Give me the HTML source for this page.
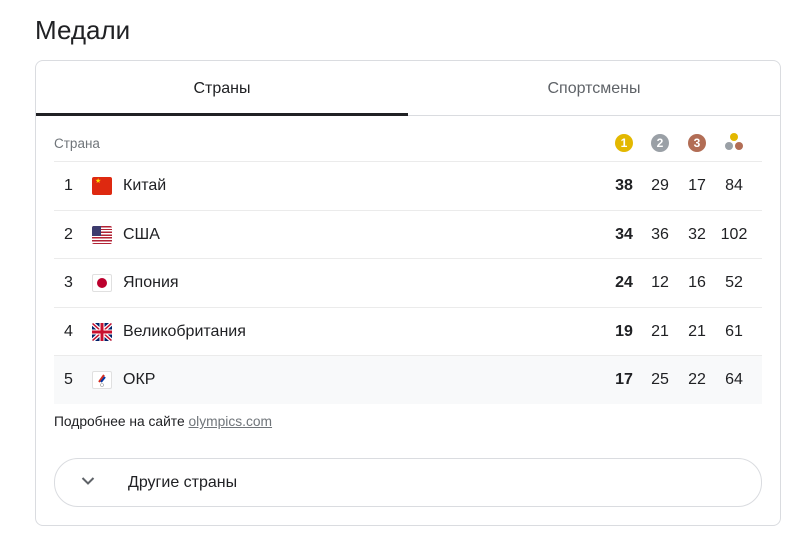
<!DOCTYPE html>
<html><head><meta charset="utf-8"><style>
body{margin:0;background:#fff;font-family:"Liberation Sans",Arial,sans-serif;color:#202124;width:800px;height:534px;overflow:hidden;position:relative}
.abs{position:absolute}
h1{position:absolute;left:35px;top:15px;margin:0;font-size:26px;font-weight:normal;color:#202124}
.card{position:absolute;left:35px;top:60px;width:744px;height:464px;border:1px solid #dadce0;border-radius:8px}
.tab{position:absolute;top:0;height:55px;line-height:55px;font-size:16px;text-align:center}
.row{position:absolute;left:54px;width:708px;height:48px;border-top:1px solid #ebebeb;font-size:16px}
.row span{position:absolute;top:0;line-height:48px}
.c{width:40px;text-align:center;margin-left:-20px}
.med{position:absolute;top:134px;width:18px;height:18px;border-radius:50%;color:#fff;font-size:12px;font-weight:bold;text-align:center;line-height:18px}
.flag{position:absolute;left:38px;top:15px;width:20px;height:18px;border-radius:2px;overflow:hidden}
</style></head><body>
<h1>Медали</h1>
<div class="card">
<div class="tab" style="left:0;width:372px">Страны</div>
<div class="tab" style="left:372px;width:372px;color:#5f6368">Спортсмены</div>
<div class="abs" style="left:0;top:54px;width:744px;height:1px;background:#dadce0"></div>
<div class="abs" style="left:0;top:52px;width:372px;height:3px;background:#202124"></div>
</div>
<div class="abs" style="left:54px;top:136px;font-size:13.5px;color:#70757a">Страна</div>
<div class="med" style="left:615px;background:#e3b800">1</div>
<div class="med" style="left:651px;background:#9aa0a6">2</div>
<div class="med" style="left:688px;background:#b26d55">3</div>
<div class="abs" style="left:730px;top:133px;width:8px;height:8px;border-radius:50%;background:#e3b800"></div>
<div class="abs" style="left:725px;top:142px;width:8px;height:8px;border-radius:50%;background:#9aa0a6"></div>
<div class="abs" style="left:735px;top:142px;width:8px;height:8px;border-radius:50%;background:#b26d55"></div>

<div class="row" style="top:161px"><span style="left:10px">1</span><div class="flag" style="background:#de2910"><span style="color:#ffde00;font-size:7px;line-height:9px;left:3px">★</span></div><span style="left:69px">Китай</span><span class="c" style="left:570px;font-weight:bold">38</span><span class="c" style="left:606px">29</span><span class="c" style="left:643px">17</span><span class="c" style="left:680px">84</span></div>
<div class="row" style="top:210px"><span style="left:10px">2</span><div class="flag" style="background:repeating-linear-gradient(#b22234 0 1.4px,#fff 1.4px 2.8px)"><div style="width:9px;height:10px;background:#3c3b6e"></div></div><span style="left:69px">США</span><span class="c" style="left:570px;font-weight:bold">34</span><span class="c" style="left:606px">36</span><span class="c" style="left:643px">32</span><span class="c" style="left:680px">102</span></div>
<div class="row" style="top:258px"><span style="left:10px">3</span><div class="flag" style="background:#fff;border:1px solid #e0e0e0;width:18px;height:16px"><div style="position:absolute;left:4px;top:3px;width:10px;height:10px;border-radius:50%;background:#bc002d"></div></div><span style="left:69px">Япония</span><span class="c" style="left:570px;font-weight:bold">24</span><span class="c" style="left:606px">12</span><span class="c" style="left:643px">16</span><span class="c" style="left:680px">52</span></div>
<div class="row" style="top:307px"><span style="left:10px">4</span><div class="flag" style="background:#012169"><svg width="20" height="18"><path d="M0 0L20 18M20 0L0 18" stroke="#fff" stroke-width="4"/><path d="M0 0L20 18M20 0L0 18" stroke="#c8102e" stroke-width="1.5"/><path d="M10 0V18M0 9H20" stroke="#fff" stroke-width="5"/><path d="M10 0V18M0 9H20" stroke="#c8102e" stroke-width="3"/></svg></div><span style="left:69px">Великобритания</span><span class="c" style="left:570px;font-weight:bold">19</span><span class="c" style="left:606px">21</span><span class="c" style="left:643px">21</span><span class="c" style="left:680px">61</span></div>
<div class="row" style="top:355px;background:#f8f9fa"><span style="left:10px">5</span><div class="flag" style="background:#fff;border:1px solid #e0e0e0;width:18px;height:16px"><svg width="18" height="16"><path d="M6 10L11 3" stroke="#d52b1e" stroke-width="2"/><path d="M8 10L12 5" stroke="#0039a6" stroke-width="2"/><circle cx="9" cy="13" r="1.5" fill="none" stroke="#999" stroke-width=".6"/></svg></div><span style="left:69px">ОКР</span><span class="c" style="left:570px;font-weight:bold">17</span><span class="c" style="left:606px">25</span><span class="c" style="left:643px">22</span><span class="c" style="left:680px">64</span></div>

<div class="abs" style="left:54px;top:414px;font-size:13.8px">Подробнее на сайте <span style="color:#70757a;text-decoration:underline">olympics.com</span></div>
<div class="abs" style="left:54px;top:458px;width:706px;height:47px;border:1px solid #dadce0;border-radius:24px">
<svg class="abs" style="left:26px;top:17px" width="14" height="10"><path d="M1.5 2L7 7.5L12.5 2" fill="none" stroke="#5f6368" stroke-width="2"/></svg>
<div class="abs" style="left:73px;top:15px;font-size:16px">Другие страны</div>
</div>
</body></html>
